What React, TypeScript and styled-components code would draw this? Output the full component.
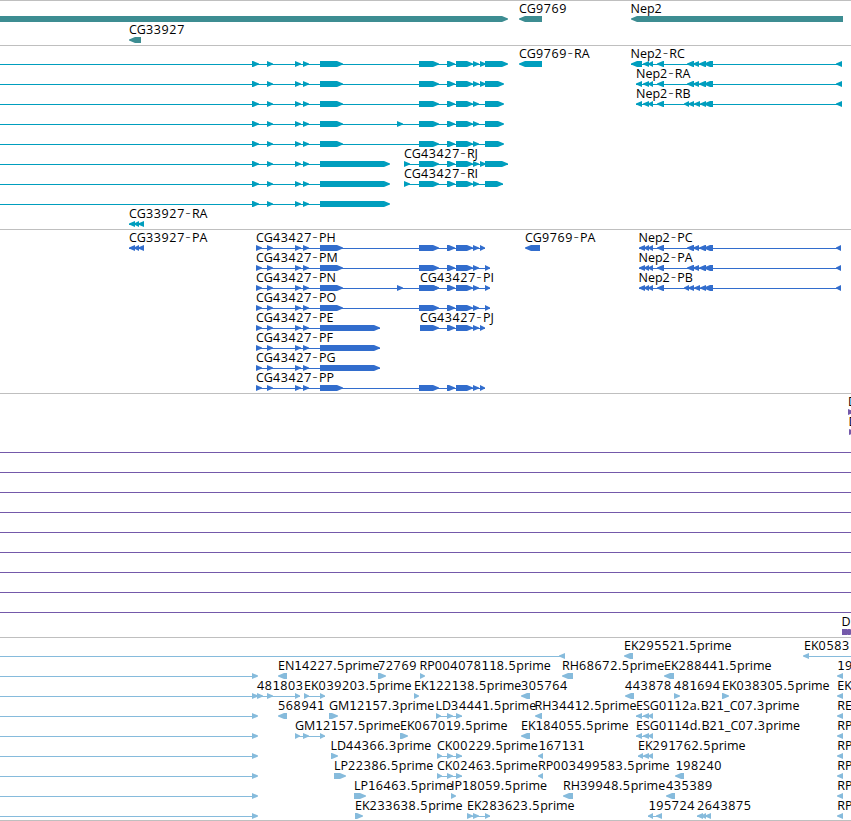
import React from "react";
import styled, { createGlobalStyle } from "styled-components";

const GlobalStyle = createGlobalStyle`
  html, body { margin: 0; padding: 0; background: #ffffff; }
  body { overflow: hidden; }
`;

const Browser = styled.main`
  display: flex;
  flex-direction: column;
  width: 851px;
  height: 821px;
  overflow: hidden;
  background: #ffffff;
`;

const Track = styled.section<{ $color: string; $gap: number }>`
  display: flex;
  flex-direction: column;
  flex: none;
  border-top: 1px solid #bfbfbf;
  padding-bottom: ${(p) => p.$gap}px;
  color: ${(p) => p.$color};
  &:last-child {
    border-bottom: 1px solid #bfbfbf;
  }
`;

const Lane = styled.svg<{ $height: number }>`
  display: block;
  flex: none;
  width: 851px;
  height: ${(p) => p.$height}px;
  overflow: visible;
  fill: currentColor;
`;

const Label = styled.text`
  font-family: "Open Sans", "Noto Sans", sans-serif;
  font-size: 12.5px;
  font-kerning: none;
  fill: #000000;
  white-space: pre;
`;

const Digits = styled.tspan`
  letter-spacing: 0.65px;
`;

const One = styled.tspan`
  font-family: "DejaVu Sans", sans-serif;
  font-size: 12px;
`;

const Dash = styled.tspan`
  font-family: "DejaVu Sans", sans-serif;
  font-size: 15px;
  font-weight: 300;
  letter-spacing: 1.2px;
`;

type Span = [number, number];
interface Feature {
  dir: "r" | "l";
  blocks: Span[];
  line?: Span;
  name?: string;
  at?: number;
}

const TOP = 15;

function blockPoints([a, b]: Span, dir: "r" | "l") {
  const head = Math.min(6, b - a);
  const y = TOP;
  return dir === "r"
    ? `${a},${y} ${b - head},${y} ${b},${y + 2.5} ${b},${y + 3.5} ${b - head},${y + 6} ${a},${y + 6}`
    : `${b},${y} ${a + head},${y} ${a},${y + 2.5} ${a},${y + 3.5} ${a + head},${y + 6} ${b},${y + 6}`;
}

function FeatureLabel({ name, x }: { name: string; x: number }) {
  const runs = name.match(/1|[02-9.]+|-|[^\d.-]+/g) ?? [];
  return (
    <Label x={x} y={12}>
      {runs.map((run, i) => {
        if (run === "1") return <One key={i}>{run}</One>;
        if (run === "-") return <Dash key={i} dx="0.3">{run}</Dash>;
        if (/^[\d.]/.test(run)) return <Digits key={i}>{run}</Digits>;
        return <tspan key={i}>{run}</tspan>;
      })}
    </Label>
  );
}

function FeatureLane({ features, height = 20 }: { features: Feature[]; height?: number }) {
  return (
    <Lane $height={height}>
      {features.map((f, i) => {
        const first = f.blocks[0];
        const last = f.blocks[f.blocks.length - 1];
        const span: Span | undefined =
          f.line ?? (f.blocks.length > 1 ? [first[0], last[1]] : undefined);
        return (
          <g key={i}>
            {span && <rect x={span[0]} y={TOP + 3} width={span[1] - span[0]} height={1} />}
            {f.blocks.map((b, j) => (
              <polygon key={j} points={blockPoints(b, f.dir)} />
            ))}
          </g>
        );
      })}
      {features.map((f, i) =>
        f.name ? <FeatureLabel key={i} name={f.name} x={f.at ?? f.blocks[0][0]} /> : null
      )}
    </Lane>
  );
}

const right = (name: string | undefined, blocks: Span[], line?: Span, at?: number): Feature => ({
  dir: "r", name, blocks, line, at,
});
const left = (name: string | undefined, blocks: Span[], line?: Span, at?: number): Feature => ({
  dir: "l", name, blocks, line, at,
});

const genes: Feature[][] = [
  [
    right(undefined, [[0, 508]]),
    left("CG9769", [[519, 542]]),
    left("Nep2", [[631, 843]], undefined, 630.5),
  ],
  [left("CG33927", [[129, 141]])],
];

const lead: Span[] = [[252, 259], [267, 273]];
const middle: Span[] = [[295, 301], [303, 309]];
const exon: Span = [320, 343];
const tail: Span[] = [[419, 439], [447, 455], [456, 473], [473, 479]];
const small: Span = [480, 486];
const start: Span[] = [...lead, ...middle];
const fullRna = (end: Span[], extra: Span[] = []) => {
  const blocks = [...start, exon, ...extra, ...tail, ...end];
  return right(undefined, blocks, [0, blocks[blocks.length - 1][1] - 1]);
};
const shortRna = () => right(undefined, [...start, [320, 390]], [0, 389]);

const nepMid: Span[] = [[643, 649], [648, 653], [657, 664]];
const nepEnd: Span[] = [[687, 694], [693, 699], [699, 706], [704, 713]];
const nepEndB: Span[] = [[684, 689], [688, 694], [694, 700], [700, 706], [704, 713]];

const transcripts: Feature[][] = [
  [
    fullRna([small, [485, 508]]),
    left("CG9769-RA", [[519, 542]]),
    left("Nep2-RC", [[631, 642], ...nepMid, ...nepEnd, [836, 842]], undefined, 630.5),
  ],
  [
    fullRna([small, [485, 504]]),
    left("Nep2-RA", [[636, 642], ...nepMid, ...nepEnd, [836, 842]]),
  ],
  [
    fullRna([[485, 504]]),
    left("Nep2-RB", [[636, 642], ...nepMid, ...nepEndB, [836, 842]]),
  ],
  [fullRna([[485, 504]], [[397, 403]])],
  [fullRna([[485, 504]])],
  [shortRna(), right("CG43427-RJ", [[404, 410], ...tail, small, [485, 508]])],
  [shortRna(), right("CG43427-RI", [[404, 410], ...tail, [485, 503]])],
  [shortRna()],
  [left("CG33927-RA", [[129, 135], [134, 139], [138, 144]])],
];

const coding: Span[] = [[256, 262], [267, 273], ...middle];
const protein = (name: string, end: Span, extra: Span[] = []) =>
  right(name, [...coding, exon, ...extra, ...tail, end]);
const shortProtein = (name: string) => right(name, [...coding, [320, 380]]);
const nepCds: Span[] = [[639, 645], [644, 649], [648, 653], [657, 664]];

const proteins: Feature[][] = [
  [
    left("CG33927-PA", [[129, 135], [134, 139], [138, 144]]),
    protein("CG43427-PH", [480, 485]),
    left("CG9769-PA", [[525, 540]]),
    left("Nep2-PC", [...nepCds, ...nepEnd, [836, 841]], undefined, 638.5),
  ],
  [
    protein("CG43427-PM", [485, 490]),
    left("Nep2-PA", [...nepCds, ...nepEnd, [836, 841]], undefined, 638.5),
  ],
  [
    protein("CG43427-PN", [485, 490], [[397, 403]]),
    right("CG43427-PI", [[420, 439]]),
    left("Nep2-PB", [...nepCds, ...nepEndB, [836, 841]], undefined, 638.5),
  ],
  [protein("CG43427-PO", [485, 490])],
  [shortProtein("CG43427-PE"), right("CG43427-PJ", [[420, 439], ...tail.slice(1), [480, 485]])],
  [shortProtein("CG43427-PF")],
  [shortProtein("CG43427-PG")],
  [protein("CG43427-PP", [480, 485])],
];

const clones: Feature[][] = [
  [right("D", [[848, 854]])],
  [right("D", [[849, 855]], undefined, 848.5)],
  ...Array.from({ length: 9 }, (): Feature[] => [right(undefined, [], [0, 851])]),
  [right("D", [[842, 853], [848, 856]], undefined, 841.5)],
];

const edge = (name: string): Feature => left(name, [[837, 843]], undefined, 837.3);
const opener = (): Feature => right(undefined, [[252, 258]], [0, 254]);
const pair: Span[] = [[447, 453], [456, 462]];

const ests: Feature[][] = [
  [
    left(undefined, [[559, 565]], [0, 564]),
    left("EK295521.5prime", [[624, 633]]),
    left("EK0583", [[803, 809]], [805, 851], 804),
  ],
  [
    opener(),
    left("EN14227.5prime", [[278, 287]]),
    right("72769", [[378, 386]]),
    right("RP004078118.5prime", [[420, 425]], undefined, 419.5),
    left("RH68672.5prime", [[562, 573]]),
    left("EK288441.5prime", [[664, 674]]),
    edge("19"),
  ],
  [
    opener(),
    right("481803", [[257, 263], [267, 273], [295, 300]]),
    right("EK039203.5prime", [[304, 309], [320, 325]]),
    right("EK122138.5prime", [[414, 419]]),
    left("305764", [[521, 530]]),
    left("443878", [[625, 634]]),
    right("481694", [[674, 680]]),
    right("EK038305.5prime", [[722, 729]]),
    edge("EK"),
  ],
  [
    opener(),
    left("568941", [[278, 287]]),
    right("GM12157.3prime", [[329, 338]]),
    right("LD34441.5prime", [[436, 441], ...pair], undefined, 435.5),
    left("RH34412.5prime", [[535, 542]], undefined, 534.5),
    left("ESG0112a.B21_C07.3prime", [[636, 642], [643, 649], [648, 653]]),
    edge("RE"),
  ],
  [
    opener(),
    right("GM12157.5prime", [[295, 300], [303, 309], [320, 325]]),
    right("EK067019.5prime", [[400, 408]]),
    left("EK184055.5prime", [[521, 530]]),
    left("ESG0114d.B21_C07.3prime", [[636, 642], [643, 649], [648, 653]]),
    edge("RP"),
  ],
  [
    opener(),
    right("LD44366.3prime", [[331, 338]], undefined, 330.5),
    right("CK00229.5prime", [[437, 442], ...pair]),
    left("167131", [[538, 543]], undefined, 538.5),
    left("EK291762.5prime", [[638, 643], [643, 649], [648, 653]]),
    edge("RP"),
  ],
  [
    opener(),
    right("LP22386.5prime", [[334, 346]]),
    right("CK02463.5prime", [[437, 442], ...pair]),
    left("RP003499583.5prime", [[538, 543]]),
    left("198240", [[675, 684]], undefined, 675.5),
    edge("RP"),
  ],
  [
    opener(),
    right("LP16463.5prime", [[354, 366]]),
    right("IP18059.5prime", [[451, 456]]),
    left("RH39948.5prime", [[563, 573]]),
    left("435389", [[666, 675]]),
    edge("RP"),
  ],
  [
    opener(),
    right("EK233638.5prime", [[355, 363]]),
    right("EK283623.5prime", [[467, 473], [473, 479], [485, 490]]),
    left("195724", [[648, 653], [656, 662]], undefined, 648.5),
    left("2643875", [[697, 703], [701, 706], [705, 711]]),
    edge("RP"),
  ],
];

const tracks = [
  { id: "genes", color: "#3d8d92", lanes: genes, height: 21, gap: 2 },
  { id: "transcripts", color: "#009ebe", lanes: transcripts, height: 20, gap: 3 },
  { id: "proteins", color: "#326dcd", lanes: proteins, height: 20, gap: 3 },
  { id: "clones", color: "#7459aa", lanes: clones, height: 20, gap: 3 },
  { id: "ests", color: "#86bbdc", lanes: ests, height: 20, gap: 2 },
];

export default function App() {
  return (
    <>
      <GlobalStyle />
      <Browser>
        {tracks.map((t) => (
          <Track key={t.id} $color={t.color} $gap={t.gap}>
            {t.lanes.map((features, i) => (
              <FeatureLane key={i} features={features} height={t.height} />
            ))}
          </Track>
        ))}
      </Browser>
    </>
  );
}
